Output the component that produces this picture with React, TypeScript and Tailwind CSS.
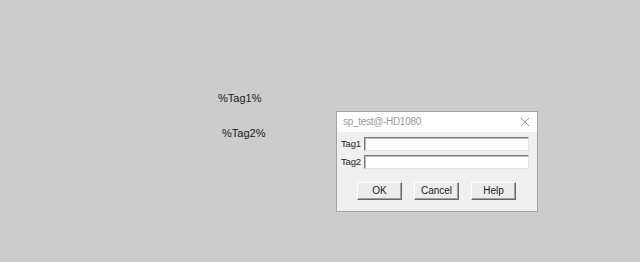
import React from "react";

export default function App() {
  const font = { fontFamily: '"Liberation Sans", Arial, sans-serif' };
  return (
    <div className="relative w-[640px] h-[262px] bg-[#cccccc] overflow-hidden" style={font}>
      <div className="absolute left-[218px] top-[91px] text-[11px] leading-[14px] text-[#1a1a1a]">%Tag1%</div>
      <div className="absolute left-[222px] top-[126px] text-[11px] leading-[14px] text-[#1a1a1a]">%Tag2%</div>

      <div className="absolute left-[336px] top-[111px] w-[202px] h-[101px] border border-[#a3a3a3] bg-[#f0f0f0] flex flex-col">
        <div className="h-[20px] bg-white flex items-center justify-between pl-[6px] pr-[7px]">
          <span className="text-[10px] tracking-[-0.3px] text-[#9a9a9a] leading-none">sp_test@-HD1080</span>
          <svg width="10" height="10" viewBox="0 0 10 10" className="mt-[-1px]">
            <path d="M1 1 L9 9 M9 1 L1 9" stroke="#9a9a9a" strokeWidth="1" />
          </svg>
        </div>
        <div className="flex flex-col pt-[5px] pl-[4px] pr-[8px] gap-[4px]">
          {["Tag1", "Tag2"].map((t) => (
            <div key={t} className="flex items-center">
              <span className="w-[23px] text-[9.5px] tracking-[-0.2px] text-[#1a1a1a] leading-none">{t}</span>
              <div className="flex-1 h-[14px] bg-white border-t border-l border-t-[#7a7a7a] border-l-[#7a7a7a] border-b border-r border-b-[#e3e3e3] border-r-[#e3e3e3] shadow-[inset_1px_1px_0_#b9b9b9]" />
            </div>
          ))}
        </div>
        <div className="flex pl-[20px] gap-[12px] mt-[13px]">
          {["OK", "Cancel", "Help"].map((b) => (
            <div
              key={b}
              className="w-[45px] h-[18px] bg-[#ececec] border border-t-white border-l-white border-r-[#696969] border-b-[#696969] shadow-[inset_-1px_-1px_0_#a0a0a0] flex items-center justify-center text-[10px] text-[#1a1a1a] leading-none"
            >
              {b}
            </div>
          ))}
        </div>
      </div>
    </div>
  );
}
